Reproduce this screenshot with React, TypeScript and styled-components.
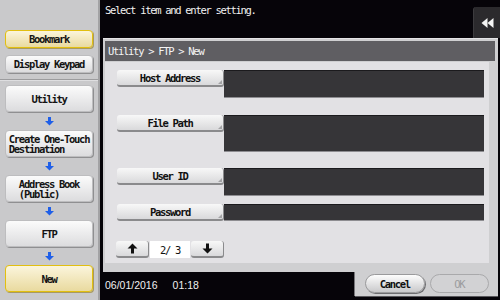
import React from 'react';
import styled, { createGlobalStyle, css } from 'styled-components';

const Global = createGlobalStyle`
  html, body { margin: 0; padding: 0; background: #060409; }
  body { width: 500px; height: 300px; overflow: hidden; }
  #root { width: 500px; height: 300px; }
`;

const mono = `"DejaVu Sans Mono", "Liberation Mono", monospace`;

const Screen = styled.div`
  display: flex;
  width: 500px;
  height: 300px;
  background: #060409;
  font-family: ${mono};
  font-size: 10.5px;
  letter-spacing: -1.3px;
  color: #111;
`;

const Sidebar = styled.aside`
  width: 98px;
  flex: none;
  background: #c9c9cb;
  border-right: 2px solid #a2a2a4;
  display: flex;
  flex-direction: column;
`;

const SideTop = styled.div`
  display: flex;
  flex-direction: column;
  gap: 7px;
  padding: 30px 5px 6px 5px;
  border-bottom: 1px solid #9c9c9e;
  box-shadow: 0 1px 0 #dedee0;
`;

const SideFlow = styled.div`
  display: flex;
  flex-direction: column;
  padding: 5px 5px 0 5px;
`;

const SideButton = styled.div<{ $h: number; $active?: boolean }>`
  height: ${(p) => p.$h}px;
  box-sizing: border-box;
  border-radius: 4px;
  display: flex;
  align-items: center;
  justify-content: center;
  line-height: 10px;
  font-weight: 600;
  color: #141414;
  ${(p) =>
    p.$active
      ? css`
          background: linear-gradient(#fbf5dc, #e9da9f);
          border: 1px solid #e2bf10;
          box-shadow: 1px 1px 0 #a89a60;
        `
      : css`
          background: linear-gradient(#fbfbfb, #dcdcde);
          border: 1px solid #bdbdbf;
          box-shadow: 1px 1px 0 #8f8f91;
        `}
`;

const SideLabel = styled.span`
  display: inline-block;
  text-align: left;
  white-space: pre;
`;

const FlowArrow = styled.div`
  height: 18px;
  display: flex;
  align-items: center;
  justify-content: center;
`;

const Main = styled.main`
  flex: 1;
  display: flex;
  flex-direction: column;
  min-width: 0;
`;

const TopBar = styled.div`
  height: 38px;
  flex: none;
  display: flex;
  justify-content: space-between;
  align-items: flex-start;
`;

const Message = styled.div`
  color: #f2f2f2;
  padding: 4px 0 0 5px;
  line-height: 12px;
`;

const BackButton = styled.div`
  width: 27px;
  height: 31px;
  margin-top: 7px;
  background: #2b2a2d;
  border-top-left-radius: 3px;
  border-left: 1px solid #3c3b3e;
  box-sizing: border-box;
  display: flex;
  align-items: center;
  justify-content: center;
`;

const Panel = styled.section`
  flex: 1;
  margin: 0 2px 0 3px;
  background: #cfcfd1;
  border-top: 1px solid #e4e4e6;
  padding: 2px 3px 9px 2px;
  display: flex;
  flex-direction: column;
  min-height: 0;
`;

const PanelHeader = styled.div`
  height: 20px;
  line-height: 20px;
  background: #5f5e62;
  color: #f4f4f4;
  padding-left: 3px;
  flex: none;
`;

const Content = styled.div`
  flex: 1;
  margin: 1px 6px 0 0;
  background: #e2e1e4;
  padding: 8px 0 0 12px;
  display: flex;
  flex-direction: column;
`;

const FieldRow = styled.div<{ $gap: number }>`
  display: flex;
  align-items: flex-start;
  margin-top: ${(p) => p.$gap}px;
`;

const LabelButton = styled.div`
  position: relative;
  width: 107px;
  height: 17px;
  flex: none;
  box-sizing: border-box;
  border-radius: 3px;
  background: linear-gradient(#f8f8f8, #d9d9db);
  border-right: 1px solid #8a8a8c;
  border-bottom: 2px solid #8a8a8c;
  display: flex;
  align-items: center;
  justify-content: center;
  font-weight: bold;
  color: #111;
  &::after {
    content: '';
    position: absolute;
    right: 1px;
    bottom: 1px;
    border-left: 4px solid transparent;
    border-bottom: 4px solid #a3a3a5;
  }
`;

const InputBox = styled.div<{ $h: number }>`
  width: 260px;
  height: ${(p) => p.$h}px;
  box-sizing: border-box;
  background: #363538;
  border-top: 1px solid #1b1a1d;
  border-bottom: 1px solid #8e8d91;
`;

const Pager = styled.div`
  display: flex;
  align-items: center;
  gap: 1px;
  margin: 20px 0 0 -1px;
`;

const PageButton = styled.div<{ $w: number }>`
  width: ${(p) => p.$w}px;
  height: 17px;
  box-sizing: border-box;
  border-radius: 3px;
  background: linear-gradient(#f8f8f8, #d9d9db);
  border-right: 1px solid #8a8a8c;
  border-bottom: 2px solid #8a8a8c;
  display: flex;
  align-items: center;
  justify-content: center;
`;

const PageBox = styled.div`
  width: 40px;
  height: 17px;
  background: #ffffff;
  display: flex;
  align-items: center;
  justify-content: center;
  white-space: pre;
  color: #111;
`;

const Footer = styled.div`
  height: 28px;
  flex: none;
  display: flex;
  justify-content: space-between;
  align-items: flex-start;
`;

const DateText = styled.div`
  display: flex;
  gap: 15px;
  padding: 7px 0 0 5px;
  font-family: "Liberation Sans", Arial, sans-serif;
  font-size: 10.5px;
  letter-spacing: 0;
  line-height: 12px;
  color: #f0f0f0;
`;

const ActionTab = styled.div`
  width: 143px;
  height: 24px;
  box-sizing: border-box;
  margin-right: 2px;
  background: #cfcfd1;
  box-shadow: -1px 0 0 #77767a, 0 1px 0 #58575b;
  padding: 2px 9px 0 10px;
  display: flex;
  gap: 5px;
`;

const PillButton = styled.div<{ $disabled?: boolean }>`
  width: 60px;
  height: 19px;
  box-sizing: border-box;
  border-radius: 10px;
  display: flex;
  align-items: center;
  justify-content: center;
  font-weight: bold;
  ${(p) =>
    p.$disabled
      ? css`
          background: #d2d2d4;
          border: 1px solid #a9a9ab;
          color: #9c9c9e;
          font-weight: normal;
        `
      : css`
          background: linear-gradient(#fdfdfd, #c9c9cb);
          border: 1px solid #9a9a9c;
          box-shadow: 1px 1px 0 #6d6d70;
          color: #111;
        `}
`;

const BlueArrow = () => (
  <svg width="9" height="9" viewBox="0 0 9 9">
    <rect x="3" y="0" width="3" height="4.5" fill="#1f5fe8" />
    <polygon points="0,4 9,4 4.5,8.5" fill="#1f5fe8" />
  </svg>
);

const RewindIcon = () => (
  <svg width="13" height="10" viewBox="0 0 13 10">
    <polygon points="6.5,0 6.5,10 0.5,5" fill="#f4f4f4" />
    <polygon points="12.5,0 12.5,10 6.5,5" fill="#f4f4f4" />
  </svg>
);

const UpArrow = () => (
  <svg width="11" height="11" viewBox="0 0 11 11">
    <path d="M5.5 0.5 L10.5 5.5 L7 5.5 L7 10.5 L4 10.5 L4 5.5 L0.5 5.5 Z" fill="#111" />
  </svg>
);

const DownArrow = () => (
  <svg width="11" height="11" viewBox="0 0 11 11">
    <path d="M5.5 10.5 L10.5 5.5 L7 5.5 L7 0.5 L4 0.5 L4 5.5 L0.5 5.5 Z" fill="#111" />
  </svg>
);

const flow = [
  { label: 'Utility', h: 27 },
  { label: 'Create One-Touch\nDestination', h: 27 },
  { label: 'Address Book\n(Public)', h: 27 },
  { label: 'FTP', h: 27 },
  { label: 'New', h: 27, active: true },
];

const fields = [
  { label: 'Host Address', h: 28, gap: 0 },
  { label: 'File Path', h: 37, gap: 17 },
  { label: 'User ID', h: 28, gap: 16 },
  { label: 'Password', h: 17, gap: 8 },
];

export default function App() {
  return (
    <>
      <Global />
      <Screen>
        <Sidebar>
          <SideTop>
            <SideButton $h={18} $active>
              Bookmark
            </SideButton>
            <SideButton $h={18}>Display Keypad</SideButton>
          </SideTop>
          <SideFlow>
            {flow.map((f, i) => (
              <React.Fragment key={f.label}>
                {i > 0 && (
                  <FlowArrow>
                    <BlueArrow />
                  </FlowArrow>
                )}
                <SideButton $h={f.h} $active={f.active}>
                  <SideLabel>{f.label}</SideLabel>
                </SideButton>
              </React.Fragment>
            ))}
          </SideFlow>
        </Sidebar>
        <Main>
          <TopBar>
            <Message>Select item and enter setting.</Message>
            <BackButton>
              <RewindIcon />
            </BackButton>
          </TopBar>
          <Panel>
            <PanelHeader>Utility &gt; FTP &gt; New</PanelHeader>
            <Content>
              {fields.map((f) => (
                <FieldRow key={f.label} $gap={f.gap}>
                  <LabelButton>{f.label}</LabelButton>
                  <InputBox $h={f.h} />
                </FieldRow>
              ))}
              <Pager>
                <PageButton $w={33}>
                  <UpArrow />
                </PageButton>
                <PageBox>{'2/ 3'}</PageBox>
                <PageButton $w={33}>
                  <DownArrow />
                </PageButton>
              </Pager>
            </Content>
          </Panel>
          <Footer>
            <DateText>
              <span>06/01/2016</span>
              <span>01:18</span>
            </DateText>
            <ActionTab>
              <PillButton>Cancel</PillButton>
              <PillButton $disabled>OK</PillButton>
            </ActionTab>
          </Footer>
        </Main>
      </Screen>
    </>
  );
}
